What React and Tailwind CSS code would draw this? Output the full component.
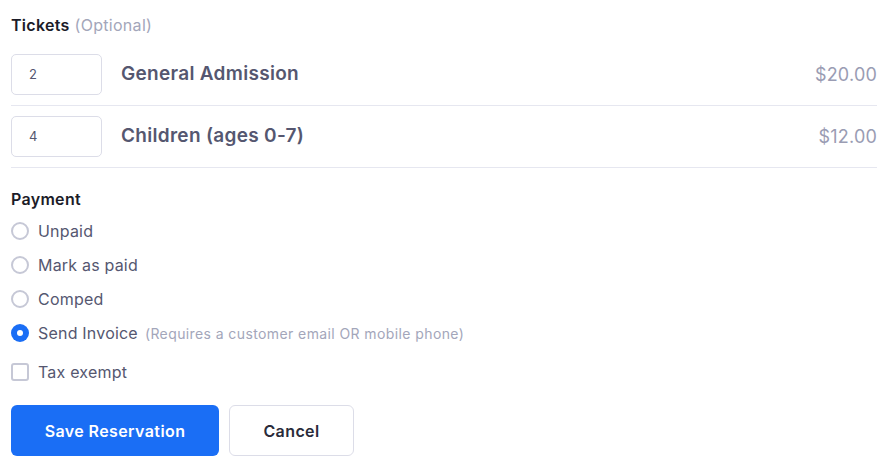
import React from 'react';

const tickets = [
    { id: 1, qty: "2", name: "General Admission", price: "$20.00" },
    { id: 2, qty: "4", name: "Children (ages 0-7)", price: "$12.00" },
];

const payments = [
    { id: "unpaid", label: "Unpaid" },
    { id: "paid", label: "Mark as paid" },
    { id: "comped", label: "Comped" },
    { id: "invoice", label: "Send Invoice", note: "(Requires a customer email OR mobile phone)" },
];

const App = () => {
    const selected = "invoice";

    return (
        <div className="w-full bg-white pl-[11px] pt-[14px] font-['Inter','Noto_Sans',sans-serif]">
            <div className="w-[866px]">
                {/* Tickets */}
                <div className="text-[16px] leading-[22px] tracking-[0.3px]">
                    <span className="font-semibold text-[#1c1c28]">Tickets</span>{" "}
                    <span className="text-[#a3a6ba]">(Optional)</span>
                </div>

                <div className="mt-[18px]">
                    {tickets.map((t) => (
                        <div key={t.id} className="flex items-center border-b border-[#e6e7f0] pb-[10px] mb-[10px] last:mb-0">
                            <div className="w-[91px] h-[41px] rounded-[5px] border border-[#dcdde8] flex items-center pl-[17px] text-[13px] text-[#555770]">
                                {t.qty}
                            </div>
                            <div className="ml-[19px] text-[19px] font-semibold text-[#555770] tracking-[0.3px]">
                                {t.name}
                            </div>
                            <div className="ml-auto text-[18px] text-[#9a9cb3] tracking-[0.2px]">
                                {t.price}
                            </div>
                        </div>
                    ))}
                </div>

                {/* Payment */}
                <div className="mt-[20px] text-[16px] leading-[22px] font-semibold text-[#1c1c28] tracking-[0.3px]">
                    Payment
                </div>

                <div className="mt-[10px] flex flex-col gap-[12px]">
                    {payments.map((p) => (
                        <label key={p.id} className="flex items-center h-[22px]">
                            {selected === p.id ? (
                                <span className="w-[18px] h-[18px] rounded-full bg-[#1a6ef5] flex items-center justify-center">
                                    <span className="w-[6px] h-[6px] rounded-full bg-white" />
                                </span>
                            ) : (
                                <span className="w-[18px] h-[18px] rounded-full border-2 border-[#c6c8d6]" />
                            )}
                            <span className="ml-[9px] text-[16px] text-[#555770] tracking-[0.2px]">{p.label}</span>
                            {p.note && (
                                <span className="ml-[7px] text-[14px] text-[#a3a6ba] tracking-[0.4px]">{p.note}</span>
                            )}
                        </label>
                    ))}
                </div>

                <label className="mt-[17px] flex items-center h-[22px]">
                    <span className="w-[18px] h-[18px] rounded-[3px] border-2 border-[#c6c8d6]" />
                    <span className="ml-[9px] text-[16px] text-[#555770] tracking-[0.2px]">Tax exempt</span>
                </label>

                {/* Buttons */}
                <div className="mt-[22px] flex gap-[10px]">
                    <button className="w-[208px] h-[51px] rounded-[6px] bg-[#1a6ef5] text-white text-[16px] font-semibold tracking-[0.4px]">
                        Save Reservation
                    </button>
                    <button className="w-[125px] h-[51px] rounded-[6px] border border-[#dcdde8] bg-white text-[#2a2b3a] text-[16px] font-semibold tracking-[0.4px]">
                        Cancel
                    </button>
                </div>
            </div>
        </div>
    );
};

export default App;
